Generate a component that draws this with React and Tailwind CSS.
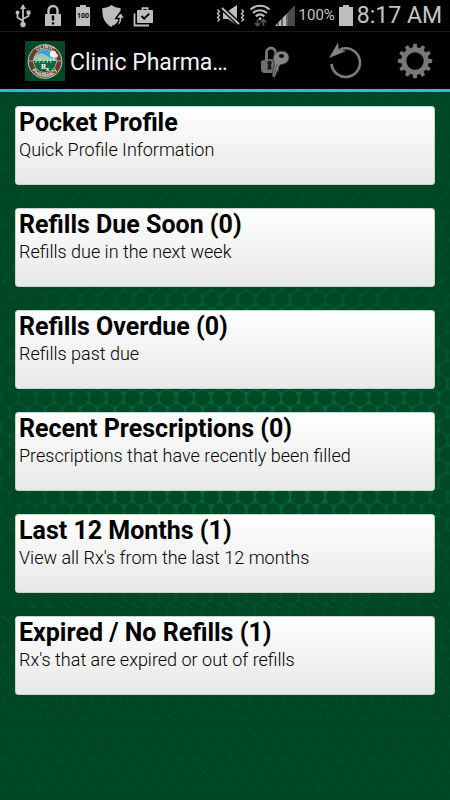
const CARDS = [
  { title: 'Pocket Profile', detail: 'Quick Profile Information' },
  { title: 'Refills Due Soon (0)', detail: 'Refills due in the next week' },
  { title: 'Refills Overdue (0)', detail: 'Refills past due' },
  { title: 'Recent Prescriptions (0)', detail: 'Prescriptions that have recently been filled' },
  { title: 'Last 12 Months (1)', detail: "View all Rx's from the last 12 months" },
  { title: 'Expired / No Refills (1)', detail: "Rx's that are expired or out of refills" },
];

// Teeth of the settings gear, one every 30 degrees.
const GEAR_TEETH = Array.from({ length: 12 }, (_, i) => i * 30);

function UsbIcon() {
  return (
    <svg width="22" height="24" viewBox="0 0 22 24" fill="none" stroke="#bdbdbd" strokeWidth="1.8">
      <path d="M11 4v16M11 17l-5.500-3.500V9M11 15l5.500-3V9" />
      <path d="M11 0l3 5H8z" fill="#bdbdbd" stroke="none" />
      <circle cx="11" cy="20.500" r="2.700" fill="#bdbdbd" stroke="none" />
      <circle cx="5.500" cy="8.500" r="1.900" fill="#bdbdbd" stroke="none" />
      <path d="M14.500 6.500h4v4h-4z" fill="#bdbdbd" stroke="none" />
    </svg>
  );
}

function LockIcon() {
  return (
    <svg width="22" height="24" viewBox="0 0 22 24">
      <path d="M6.500 10V6.500a4.500 4.500 0 0 1 9 0V10" fill="none" stroke="#bdbdbd" strokeWidth="2.400" />
      <path d="M3 10h16v12H3z" fill="#bdbdbd" />
      <path d="M9.800 11.500h2.400v5H9.800zM9.800 18.200h2.400v2.200H9.800z" fill="#000" />
    </svg>
  );
}

function BatteryFullIcon() {
  return (
    <svg width="22" height="24" viewBox="0 0 22 24">
      <path d="M8 1h6v2h4v19H4V3h4z" fill="#bdbdbd" />
      <text x="11" y="14" textAnchor="middle" fontSize="7" fontWeight="700" fill="#000">
        100
      </text>
    </svg>
  );
}

function ShieldIcon() {
  return (
    <svg width="22" height="24" viewBox="0 0 22 24" className="overflow-visible">
      <path d="M9.500 1c2.500 2 5.500 3 9 3 .8 9-1.500 15-9 19C2 19 0 13 .3 4 4 4 7 3 9.500 1z" fill="#bdbdbd" />
      <path
        d="M10 22.500c4.500-.5 7-3 7-8h-3.300l4.800-6.500 4.800 6.500H20c0 5-3 8.500-10 8z"
        fill="#bdbdbd"
        stroke="#000"
        strokeWidth="1.400"
      />
    </svg>
  );
}

function BagIcon() {
  return (
    <svg width="22" height="24" viewBox="0 0 22 24">
      <path d="M2.500 9.500v12h14.500" fill="none" stroke="#bdbdbd" strokeWidth="1.800" />
      <path d="M10.500 7V4.200h5V7" fill="none" stroke="#bdbdbd" strokeWidth="1.800" />
      <rect x="5" y="6" width="16" height="13" rx="1" fill="#bdbdbd" />
      <path d="M9.500 12l2.700 2.700 5-5" fill="none" stroke="#000" strokeWidth="1.900" />
    </svg>
  );
}

function MuteIcon() {
  return (
    <svg width="29" height="24" viewBox="0 0 29 24" fill="none" stroke="#bdbdbd">
      <path d="M7 7h5l9-6v20l-9-6H7z" fill="#bdbdbd" stroke="none" />
      <path d="M5 3l18 17" stroke="#000" strokeWidth="4.500" />
      <path d="M6 4l17 16" strokeWidth="1.900" />
      <path d="M1.500 5.500l2 2-2 2 2 2-2 2 2 2-2 2M25.500 5.500l2 2-2 2 2 2-2 2 2 2-2 2" strokeWidth="1.400" />
    </svg>
  );
}

function WifiIcon() {
  return (
    <svg width="22" height="24" viewBox="0 0 22 24" fill="none" stroke="#bdbdbd" strokeWidth="2.200">
      <path d="M1.500 5.500c5.500-5 13.500-5 19 0M4 9c4.200-3.700 9.800-3.700 14 0M6.800 12.300c2.500-2.200 5.900-2.200 8.400 0" />
      <circle cx="11" cy="14.800" r="1.500" fill="#bdbdbd" stroke="none" />
      <path d="M8.500 15.500v6M6 19l2.500 3 2.500-3M14.500 22v-6M12 18.500l2.500-3 2.500 3" stroke="#555" strokeWidth="1.600" />
    </svg>
  );
}

function SignalIcon() {
  return (
    <svg width="20" height="24" viewBox="0 0 20 24">
      <path d="M13 8l7-7v21h-7z" fill="#4a4a4a" />
      <path d="M0 22l2.500-3v3zM4 17.500l2.500-2.500v7H4zM8 13.500l3-3V22H8z" fill="#bdbdbd" />
      <path d="M2.500 19L4 17.500V22H2.500zM6.500 15L8 13.500V22H6.500zM11 10.500l2-2V22h-2z" fill="#6b6b6b" />
    </svg>
  );
}

function StatusBar() {
  return (
    <div className="flex h-8 items-center justify-between border-b border-[#1b1b1b] pl-3 pr-2 text-[#c4c4c4]">
      <div className="flex gap-2">
        <UsbIcon />
        <LockIcon />
        <BatteryFullIcon />
        <ShieldIcon />
        <BagIcon />
      </div>
      <div className="flex items-center gap-1">
        <MuteIcon />
        <WifiIcon />
        <SignalIcon />
        <span className="text-[15px]">100%</span>
        <svg width="14" height="24" viewBox="0 0 14 24">
          <path d="M4 1h6v2h4v19H0V3h4z" fill="#bdbdbd" />
        </svg>
        <span className="text-[23px] leading-8">8:17 AM</span>
      </div>
    </div>
  );
}

function ClinicLogo() {
  return (
    <svg width="40" height="40" viewBox="0 0 40 40" className="shrink-0">
      <defs>
        <path id="ring-top" d="M7.500 20a12.500 12.500 0 0 1 25 0" />
        <path id="ring-bottom" d="M3.800 20a16.200 16.200 0 0 0 32.400 0" />
        <clipPath id="scene">
          <circle cx="20" cy="20" r="11.200" />
        </clipPath>
      </defs>
      <path d="M0 0h40v40H0z" fill="#04482a" />
      <circle cx="20" cy="20.500" r="16.800" fill="#6b3a24" stroke="#a9d3cf" strokeWidth="1" />
      <circle cx="20" cy="20" r="11.700" fill="#dce8e2" />
      <g clipPath="url(#scene)">
        <path d="M8 8h24v12H8z" fill="#3aa0dc" />
        <path d="M8 17c5-5 9-6 14-2l10 4v4H8z" fill="#9bc9b0" />
        <path d="M8 20h24v14H8z" fill="#0d6a3e" />
        <path d="M10 22l5-5M14 22l3-5M18 22l2-5M22 22l1-4M26 22l-1-4" stroke="#c7dccb" strokeWidth="0.900" />
      </g>
      <circle cx="28" cy="13" r="3.200" fill="#f2f6f3" />
      <circle cx="31" cy="14.500" r="2" fill="#dfe9e2" />
      <path d="M29 15v4" stroke="#f2f6f3" strokeWidth="1.200" />
      <path d="M4 20h4.500M31.500 20H36" stroke="#c8bba8" strokeWidth="0.800" />
      <text fontSize="5.500" fontWeight="700" fill="#e2d8cb">
        <textPath href="#ring-top" startOffset="50%" textAnchor="middle">
          CLINIC
        </textPath>
      </text>
      <text fontSize="5.500" fontWeight="700" fill="#e2d8cb">
        <textPath href="#ring-bottom" startOffset="50%" textAnchor="middle">
          PHARMACY
        </textPath>
      </text>
      <text x="16" y="28" fontSize="8" fontWeight="700" fill="#fff" className="font-serif">
        R
        <tspan x="21" y="30" fontSize="6">
          x
        </tspan>
      </text>
    </svg>
  );
}

function KeysIcon() {
  return (
    <svg width="30" height="36" viewBox="0 0 30 36">
      <path d="M6.500 17V9.500a4.500 4.500 0 0 1 9 0V16" fill="none" stroke="#777" strokeWidth="2.800" />
      <path d="M1 18q9-4 18 0v9q-1 3-3 3H4q-3-1-3-4z" fill="#707070" />
      <path d="M9.500 17.500a2.300 2.300 0 0 1 1.500 4l.5 5H7.500l.5-5a2.300 2.300 0 0 1 1.500-4z" fill="#161616" />
      <path
        d="M21.500 8c4.500 0 7.500 2.800 7.500 6.500S26 21 22 21.500l-2 .5-1.500 3 .5 1.500-2 1.500-.5 2.500-2 4-2.500-1.500 2.500-12.500C13.300 18.500 13 16.500 13.200 14.500 13.600 11 17 8 21.500 8z"
        fill="#858585"
        stroke="#222"
        strokeWidth="0.800"
      />
      <path d="M17 21l-3 11" stroke="#444" strokeWidth="0.700" />
      <ellipse cx="21.500" cy="13" rx="2.600" ry="2" fill="#0c0c0c" />
    </svg>
  );
}

function RefreshIcon() {
  return (
    <svg width="36" height="40" viewBox="0 0 36 40">
      <path d="M13 8.500A14.300 14.300 0 1 1 4.500 23" fill="none" stroke="#7c7c7c" strokeWidth="2.600" />
      <path d="M11 1.500l.8 7 7.200 1.500L2 17z" fill="#858585" />
    </svg>
  );
}

function GearIcon() {
  return (
    <svg width="36" height="36" viewBox="0 0 36 36">
      <circle cx="18" cy="18" r="11.200" fill="none" stroke="#787878" strokeWidth="5" />
      {GEAR_TEETH.map((angle) => (
        <path key={angle} d="M15.600 5.500l.7-4.700h3.400l.7 4.700z" fill="#787878" transform={`rotate(${angle} 18 18)`} />
      ))}
    </svg>
  );
}

function ActionBar() {
  return (
    <header className="flex h-15 items-center border-b-3 border-[#33b5e5] pl-[25px]">
      <ClinicLogo />
      <h1 className="min-w-0 flex-1 truncate pt-1 pl-[5px] text-[23px] leading-8 text-[#f3f3f3]">Clinic Pharma…</h1>
      <div className="flex">
        <button type="button" aria-label="Accounts" className="flex h-14 w-[70px] items-center justify-center">
          <KeysIcon />
        </button>
        <button type="button" aria-label="Refresh" className="flex h-14 w-[70px] items-center justify-center">
          <RefreshIcon />
        </button>
        <button type="button" aria-label="Settings" className="flex h-14 w-[70px] items-center justify-center">
          <GearIcon />
        </button>
      </div>
    </header>
  );
}

// Honeycomb backdrop: full cells in the middle, only lit rims towards the top and bottom.
function Honeycomb() {
  return (
    <svg className="absolute inset-0 h-full w-full" aria-hidden="true">
      <defs>
        <pattern id="cells" x="1.250" y="292" width="17.500" height="28.200" patternUnits="userSpaceOnUse">
          <path d="M0 0h17.500v28.200H0z" fill="#006e3d" />
          <g fill="#004a27">
            <circle cx="8.750" cy="14.100" r="8" />
            <circle cx="0" cy="0" r="8" />
            <circle cx="17.500" cy="0" r="8" />
            <circle cx="0" cy="28.200" r="8" />
            <circle cx="17.500" cy="28.200" r="8" />
          </g>
        </pattern>
        <pattern id="rims-top" x="1.250" y="292" width="17.500" height="28.200" patternUnits="userSpaceOnUse">
          <g fill="none" stroke="#006c3d" strokeWidth="1">
            <path d="M1.500 13q1.500-6 8-7" />
            <path d="M10.300 27q1.500-6 7-7" />
          </g>
        </pattern>
        <pattern id="rims-bottom" x="1.250" y="292" width="17.500" height="28.200" patternUnits="userSpaceOnUse">
          <g fill="none" stroke="#006c3d" strokeWidth="1">
            <path d="M2 6q2 5 7 6" />
            <path d="M10 20q2 5 7 6" />
          </g>
        </pattern>
        <radialGradient id="glow" cx="50%" cy="50%" r="50%">
          <stop offset="0" stopColor="#fff" />
          <stop offset="0.500" stopColor="#fff" stopOpacity="0.750" />
          <stop offset="1" stopColor="#fff" stopOpacity="0" />
        </radialGradient>
        <linearGradient id="fade-top" x1="0" y1="0" x2="0" y2="1">
          <stop offset="0" stopColor="#fff" stopOpacity="0.150" />
          <stop offset="0.270" stopColor="#fff" stopOpacity="0.600" />
          <stop offset="0.400" stopColor="#fff" stopOpacity="0" />
        </linearGradient>
        <linearGradient id="fade-bottom" x1="0" y1="0" x2="0" y2="1">
          <stop offset="0.620" stopColor="#fff" stopOpacity="0" />
          <stop offset="0.740" stopColor="#fff" stopOpacity="0.700" />
          <stop offset="1" stopColor="#fff" stopOpacity="0.250" />
        </linearGradient>
        <mask id="mask-glow">
          <ellipse cx="55%" cy="49%" rx="70%" ry="29%" fill="url(#glow)" />
        </mask>
        <mask id="mask-top">
          <rect width="100%" height="100%" fill="url(#fade-top)" />
        </mask>
        <mask id="mask-bottom">
          <rect width="100%" height="100%" fill="url(#fade-bottom)" />
        </mask>
      </defs>
      <rect width="100%" height="100%" fill="url(#cells)" mask="url(#mask-glow)" />
      <rect width="100%" height="100%" fill="url(#rims-top)" mask="url(#mask-top)" />
      <rect width="100%" height="100%" fill="url(#rims-bottom)" mask="url(#mask-bottom)" />
    </svg>
  );
}

function MenuCard({ title, detail }) {
  return (
    <button
      type="button"
      className="flex h-[79px] w-full flex-col items-start rounded-[3px] border border-[#c4d6cb] bg-linear-to-b from-white to-[#e8e8e8] px-[3px] text-left text-black"
    >
      <span className="text-[25px] leading-8 font-bold">{title}</span>
      <span className="text-lg leading-[22px] font-light">{detail}</span>
    </button>
  );
}

export default function App() {
  return (
    <div className="flex min-h-screen flex-col bg-black font-[Roboto,sans-serif]">
      <StatusBar />
      <ActionBar />
      <main className="relative flex-1 bg-[#004726]">
        <Honeycomb />
        <nav className="relative flex flex-col gap-[23px] px-[15px] py-3.5">
          {CARDS.map((card) => (
            <MenuCard key={card.title} title={card.title} detail={card.detail} />
          ))}
        </nav>
      </main>
    </div>
  );
}
